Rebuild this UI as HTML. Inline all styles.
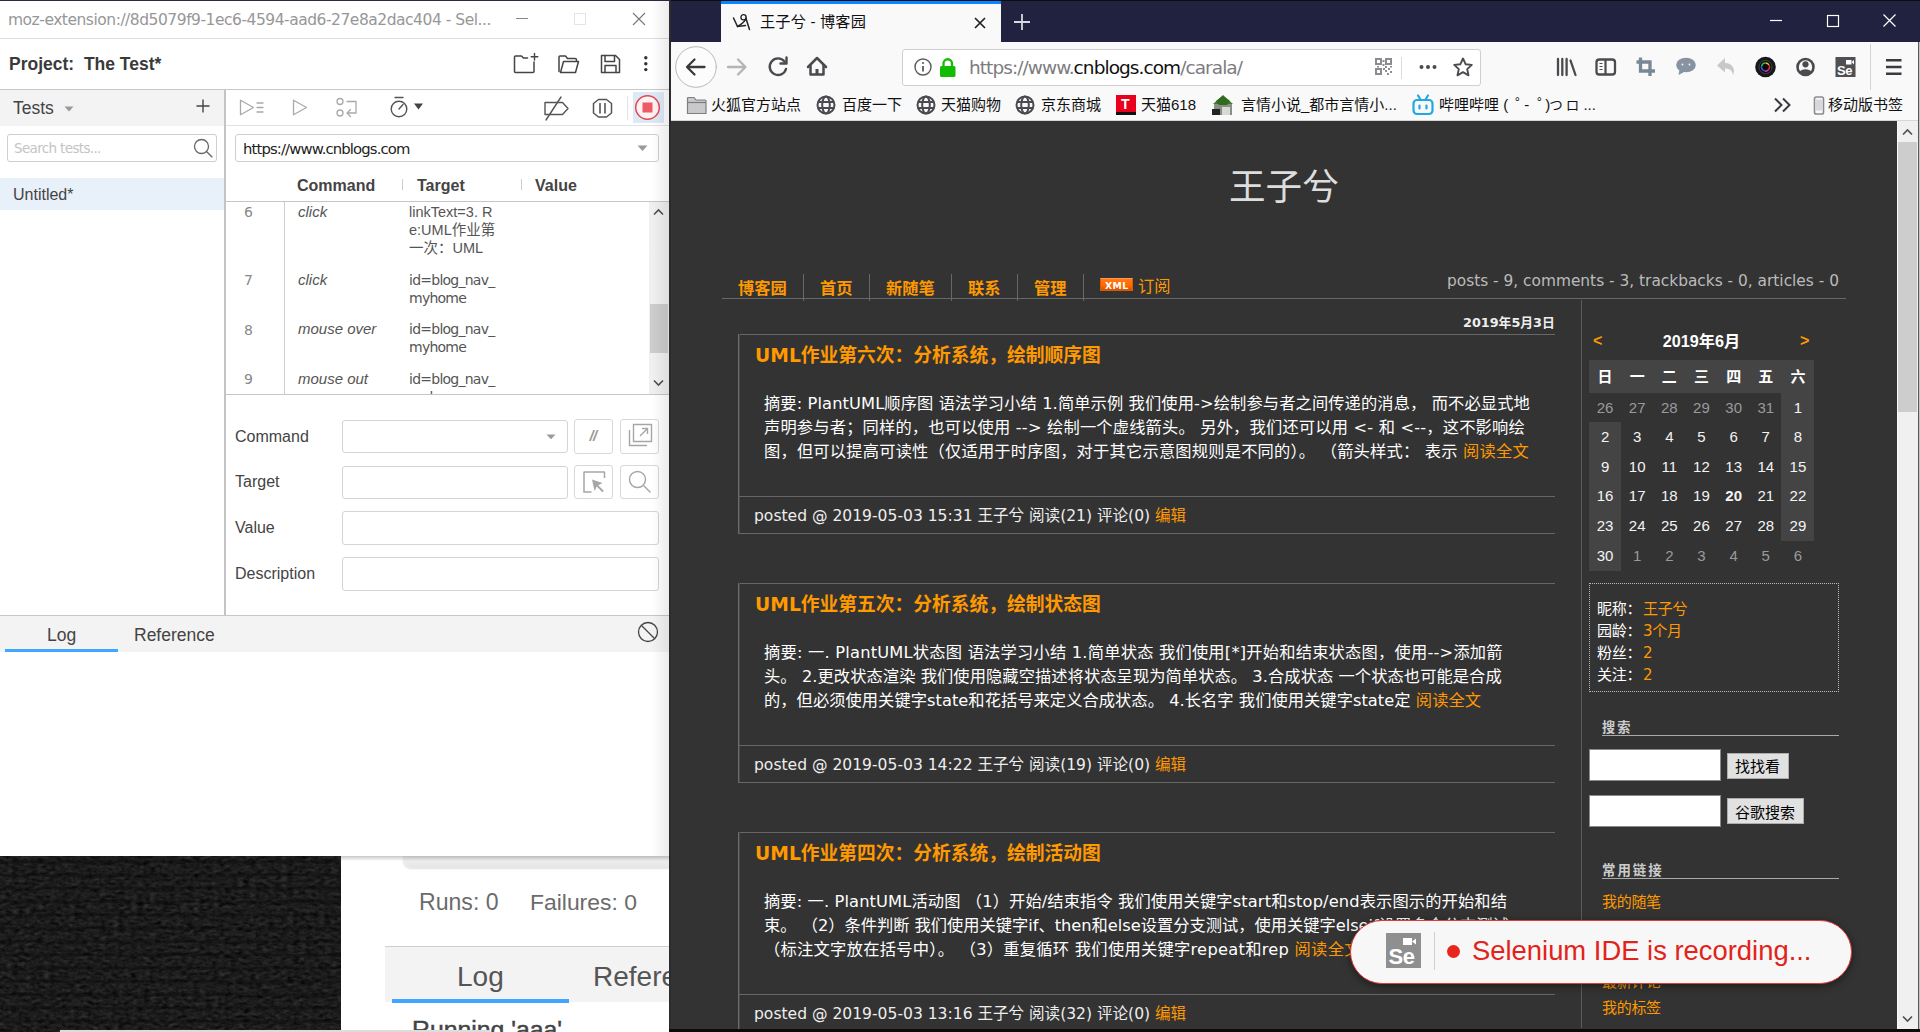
<!DOCTYPE html>
<html lang="zh-CN">
<head>
<meta charset="utf-8">
<title>Selenium IDE recording</title>
<style>
*{box-sizing:border-box;margin:0;padding:0}
html,body{width:1920px;height:1032px;overflow:hidden;background:#1b1b1b}
body{position:relative;font-family:"Liberation Sans","Noto Sans CJK SC",sans-serif;color:#333}
.abs{position:absolute}
svg{position:absolute;overflow:visible}
/* ---------- desktop bottom-left ---------- */
#desk{left:0;top:856px;width:341px;height:176px;background:#1c1c1c;overflow:hidden}
#desk:after{content:"";position:absolute;left:0;top:0;right:0;bottom:0;background:repeating-linear-gradient(0deg,rgba(0,0,0,.0) 0 8px,rgba(0,0,0,.28) 10px 11.5px,rgba(0,0,0,0) 13.3px)}
#back{left:341px;top:856px;width:329px;height:176px;background:#fff;overflow:hidden}
/* ---------- Selenium IDE window ---------- */
#ide{left:0;top:0;width:669px;height:856px;background:#fff;overflow:hidden}
#ide .t{position:absolute;white-space:nowrap;line-height:1}
/* ---------- Firefox window ---------- */
#ff{left:669px;top:0;width:1251px;height:1032px;background:#20223f;overflow:hidden}
#ff .t{position:absolute;white-space:nowrap;line-height:1}
#page{left:2px;top:121px;width:1226px;height:908px;background:#333;overflow:hidden;
 font-family:"DejaVu Sans","Noto Sans CJK SC",sans-serif;color:#eee}
#page .t{position:absolute;white-space:nowrap;line-height:1}
</style>
</head>
<body>
<div id="desk" class="abs"><svg style="left:0;top:0" width="341" height="176"><filter id="fab" x="0" y="0" width="100%" height="100%" color-interpolation-filters="sRGB"><feTurbulence type="fractalNoise" baseFrequency="0.16 0.3" numOctaves="3" seed="11"/><feColorMatrix type="matrix" values="0.12 0.12 0.12 0 -0.07  0.12 0.12 0.12 0 -0.07  0.12 0.12 0.12 0 -0.07  0 0 0 0 1"/></filter><rect width="341" height="176" filter="url(#fab)"/></svg></div>
<div id="back" class="abs"><div class="abs" style="left:0;top:0;width:329px;height:5px;background:linear-gradient(rgba(0,0,0,.22),rgba(0,0,0,0));z-index:3"></div><div class="abs" style="left:62px;top:0;width:267px;height:12px;background:linear-gradient(#f1f1f1,#e6e6e6);border-radius:0 0 0 8px;box-shadow:0 1px 2px rgba(0,0,0,.12)"></div>
<div class="abs" style="left:78px;top:35px;font-size:23.1px;color:#6b6b6b;line-height:1;white-space:nowrap">Runs: 0</div>
<div class="abs" style="left:189px;top:35px;font-size:22.9px;color:#6b6b6b;line-height:1;white-space:nowrap">Failures: 0</div>
<div class="abs" style="left:44px;top:90px;width:285px;height:56px;background:#f3f3f3;border-top:1px solid #cfcfcf"></div>
<div class="abs" style="left:116px;top:106.5px;font-size:28px;color:#555;line-height:1;white-space:nowrap">Log</div>
<div class="abs" style="left:252px;top:106.5px;font-size:28px;color:#555;line-height:1;white-space:nowrap">Reference</div>
<div class="abs" style="left:51px;top:142.5px;width:177px;height:4.5px;background:#40a6ff"></div>
<div class="abs" style="left:71px;top:162px;font-size:24.8px;color:#444;-webkit-text-stroke:.5px #444;line-height:1;white-space:nowrap">Running 'aaa'</div></div>
<div id="ide" class="abs"><div class="abs" style="left:0;top:0;width:669px;height:1px;background:#2a2a44"></div>
<div class="t" style="left:8px;top:13px;font-size:15.5px;color:#979797;font-family:'DejaVu Sans','Liberation Sans',sans-serif;letter-spacing:-.48px">moz-extension://8d5079f9-1ec6-4594-aad6-27e8a2dac404 - Sel...</div>
<svg style="left:508px;top:8px" width="150" height="24" viewBox="0 0 150 24" fill="none">
 <path d="M8 10.500H20" stroke="#888" stroke-width="1"/>
 <rect x="66.5" y="5.5" width="11" height="11" stroke="#e4e4e4" stroke-width="1"/>
 <path d="M125 5L137 17M137 5L125 17" stroke="#777" stroke-width="1.1"/>
</svg>
<div class="abs" style="left:0;top:38px;width:669px;height:1px;background:#dcdcdc"></div>
<!-- project header -->
<div class="t" style="left:9px;top:56px;font-size:17.5px;font-weight:bold;color:#3a3a3a">Project:&nbsp; The Test*</div>
<svg style="left:510px;top:51px" width="150" height="28" viewBox="0 0 150 28" fill="none" stroke="#444" stroke-width="1.5" stroke-linejoin="round" stroke-linecap="round">
 <path d="M24 11V20.500Q24 21.500 23 21.500H5.500Q4.500 21.500 4.500 20.500V6Q4.500 5 5.500 5H11.500L13.500 7H17.500"/><path d="M24.500 2.500V9M21.200 5.800H27.800" stroke-width="1.400"/>
 <path d="M49 20.500V6Q49 5 50 5H55.500L57.500 7.500H65Q66.500 7.500 66.500 9V10"/><path d="M50.500 21.500L53.500 10.500H68.500L65.500 21.500Z"/>
 <path d="M91.500 4.500H105.500L109.500 8.500V21.500H91.500Z"/><path d="M95 4.500V10.500H104.500V4.500"/><path d="M95 21.500V14.500H106V21.500"/>
 <g fill="#333" stroke="none"><circle cx="135.800" cy="6.800" r="1.700"/><circle cx="135.800" cy="12.700" r="1.700"/><circle cx="135.800" cy="18.600" r="1.700"/></g>
</svg>
<div class="abs" style="left:0;top:89px;width:669px;height:1px;background:#c8c8c8"></div>
<!-- left panel -->
<div class="abs" style="left:0;top:90px;width:224px;height:36px;background:#f3f3f3"></div>
<div class="t" style="left:13px;top:99.5px;font-size:17.5px;color:#444">Tests</div>
<svg style="left:64px;top:106px" width="10" height="6"><path d="M0.500 0.500H9.500L5 5.500Z" fill="#999"/></svg>
<svg style="left:196px;top:99px" width="14" height="14"><path d="M7 0.500V13.500M0.500 7H13.500" stroke="#444" stroke-width="1.400"/></svg>
<div class="abs" style="left:7px;top:134px;width:210px;height:28px;border:1px solid #cfcfcf;border-radius:3px;background:#fff"></div>
<div class="t" style="left:14px;top:142px;font-size:13.5px;color:#c4c4c4;font-family:'DejaVu Sans','Liberation Sans',sans-serif;letter-spacing:-.65px">Search tests...</div>
<svg style="left:193px;top:138px" width="22" height="22" fill="none" stroke="#666" stroke-width="1.300"><circle cx="8.500" cy="8.500" r="7"/><path d="M13.500 13.500L19.300 19.300"/></svg>
<div class="abs" style="left:0;top:178px;width:224px;height:32px;background:#e8f0f9"></div>
<div class="t" style="left:13px;top:187px;font-size:16px;color:#444">Untitled*</div>
<div class="abs" style="left:224px;top:90px;width:2px;height:525px;background:#c4c4c4"></div>
<!-- toolbar -->
<svg style="left:236px;top:92px" width="432" height="32" viewBox="0 0 432 32" fill="none" stroke-linejoin="round" stroke-linecap="round">
 <g stroke="#a9a9a9" stroke-width="1.300">
  <path d="M4.500 8.200L17.500 15.500L4.500 22.800Z"/><path d="M21 11H27M21 15.500H27M21 20H27"/>
  <path d="M57.500 8.200L70.500 15.500L57.500 22.800Z"/>
  <circle cx="104" cy="9.500" r="3"/><circle cx="104" cy="21" r="3"/><path d="M111 9.500H120V21H111M114.500 17.500L111 21L114.500 24.500"/>
 </g>
 <g stroke="#555" stroke-width="1.400">
  <circle cx="163" cy="17" r="7.800"/><path d="M159 5.500H167"/><path d="M163 17L167 12.500"/>
  <path d="M309 10.500H326.500L332 16.500L326.500 22.500H309Z"/><path d="M325 5L310 28"/>
  <path d="M362.500 7.500H370.500L375.500 11.500V21L370.500 25H362.500L357.500 21V11.500Z" stroke-width="1.500"/><path d="M364 11.500V21M369 11.500V21" stroke-width="1.600"/>
 </g>
 <path d="M178 11.500H187L182.500 17.500Z" fill="#444"/>
 <path d="M391.500 4V28" stroke="#e3e3e3" stroke-width="1"/>
 <rect x="397" y="0" width="31" height="31" fill="#dce9f7"/>
 <circle cx="411.500" cy="15.500" r="11.800" stroke="#e8444f" stroke-width="1.500" fill="#fdf3f3"/>
 <rect x="406.500" y="10.500" width="10" height="10" fill="#ee5b64"/>
</svg>
<div class="abs" style="left:226px;top:125px;width:443px;height:1px;background:#e2e2e2"></div>
<div class="abs" style="left:235px;top:134px;width:424px;height:28px;border:1px solid #cfcfcf;border-radius:3px;background:#fff"></div>
<div class="t" style="left:243px;top:141.5px;font-size:14.8px;color:#222;font-family:'DejaVu Sans','Liberation Sans',sans-serif;letter-spacing:-.85px">https://www.cnblogs.com</div>
<svg style="left:637px;top:145px" width="12" height="7"><path d="M0.500 0.500H10.500L5.500 6Z" fill="#999"/></svg>
<!-- table header -->
<div class="t" style="left:297px;top:178px;font-size:16px;font-weight:bold;color:#444">Command</div>
<div class="t" style="left:417px;top:178px;font-size:16px;font-weight:bold;color:#444">Target</div>
<div class="t" style="left:535px;top:178px;font-size:16px;font-weight:bold;color:#444">Value</div>
<div class="abs" style="left:402px;top:179px;width:1px;height:11px;background:#ccc"></div>
<div class="abs" style="left:521px;top:179px;width:1px;height:11px;background:#ccc"></div>
<div class="abs" style="left:226px;top:201px;width:443px;height:1px;background:#c6c6c6"></div>
<!-- table rows -->
<div class="abs" style="left:226px;top:202px;width:443px;height:192px;overflow:hidden;font-size:14.5px;color:#555">
 <div class="abs" style="left:58px;top:0;width:1px;height:192px;background:#cfcfcf"></div>
 <div class="t" style="left:18px;top:3px;color:#888;font-family:'DejaVu Sans',sans-serif;font-size:14px">6</div>
 <div class="t" style="left:72px;top:2px;font-style:italic;font-size:15px">click</div>
 <div class="t" style="left:183px;top:1px;line-height:18px">linkText=3. R<br>e:UML作业第<br>一次：UML</div>
 <div class="t" style="left:18px;top:71px;color:#888;font-family:'DejaVu Sans',sans-serif;font-size:14px">7</div>
 <div class="t" style="left:72px;top:70px;font-style:italic;font-size:15px">click</div>
 <div class="t" style="left:183px;top:69px;line-height:18px;font-family:'DejaVu Sans',sans-serif;font-size:14px;letter-spacing:-.75px">id=blog_nav_<br>myhome</div>
 <div class="t" style="left:18px;top:121px;color:#888;font-family:'DejaVu Sans',sans-serif;font-size:14px">8</div>
 <div class="t" style="left:72px;top:119px;font-style:italic;font-size:15px">mouse over</div>
 <div class="t" style="left:183px;top:118px;line-height:18px;font-family:'DejaVu Sans',sans-serif;font-size:14px;letter-spacing:-.75px">id=blog_nav_<br>myhome</div>
 <div class="t" style="left:18px;top:170px;color:#888;font-family:'DejaVu Sans',sans-serif;font-size:14px">9</div>
 <div class="t" style="left:72px;top:169px;font-style:italic;font-size:15px">mouse out</div>
 <div class="t" style="left:183px;top:168px;line-height:18px;font-family:'DejaVu Sans',sans-serif;font-size:14px;letter-spacing:-.75px">id=blog_nav_<br>myhome</div>
 <!-- scrollbar -->
 <div class="abs" style="left:423px;top:0;width:20px;height:192px;background:#f0f0f0"></div>
 <div class="abs" style="left:424px;top:102px;width:18px;height:49px;background:#cdcdcd"></div>
 <svg style="left:427px;top:6px" width="12" height="8"><path d="M1 6.500L5.500 2L10 6.500" fill="none" stroke="#505050" stroke-width="1.600"/></svg>
 <svg style="left:427px;top:177px" width="12" height="8"><path d="M1 1.500L5.500 6L10 1.500" fill="none" stroke="#505050" stroke-width="1.600"/></svg>
</div>
<div class="abs" style="left:226px;top:394px;width:443px;height:1px;background:#c6c6c6"></div>
<!-- command form -->
<div class="t" style="left:235px;top:429px;font-size:16px;color:#444">Command</div>
<div class="t" style="left:235px;top:474px;font-size:16px;color:#444">Target</div>
<div class="t" style="left:235px;top:520px;font-size:16px;color:#444">Value</div>
<div class="t" style="left:235px;top:566px;font-size:16px;color:#444">Description</div>
<div class="abs" style="left:342px;top:420px;width:226px;height:33px;border:1px solid #d4d4d4;border-radius:3px"></div>
<svg style="left:545.5px;top:433.5px" width="12" height="7"><path d="M0.500 0.500H9.500L5 5.200Z" fill="#9a9a9a"/></svg>
<div class="abs" style="left:574px;top:419px;width:39px;height:35px;border:1px solid #d8d8d8;border-radius:3px"></div>
<div class="t" style="left:589.5px;top:428px;font-size:15px;color:#9a9a9a;font-style:italic;font-weight:bold;letter-spacing:-.6px">//</div>
<div class="abs" style="left:620px;top:419px;width:39px;height:35px;border:1px solid #d8d8d8;border-radius:3px"></div>
<svg style="left:628px;top:423px" width="26" height="26" fill="none" stroke="#a6a6a6" stroke-width="1.400"><path d="M5.500 1.500H23.500V18.500H5.500Z"/><path d="M1.500 7V22.500H19"/><path d="M12 13L19.500 5.500M14 5.500H19.500V11"/></svg>
<div class="abs" style="left:342px;top:466px;width:226px;height:33px;border:1px solid #d4d4d4;border-radius:3px"></div>
<div class="abs" style="left:574px;top:465px;width:39px;height:34px;border:1px solid #d8d8d8;border-radius:3px"></div>
<svg style="left:582px;top:470px" width="26" height="26" fill="none" stroke="#a6a6a6" stroke-width="1.500"><path d="M22.500 8V2.500Q22.500 2 22 2H2.500Q2 2 2 2.500V22H9.500"/><path d="M10 9.500L20.500 13L16.200 15.200L21.800 20.800L20.400 22.200L14.800 16.600L12.500 21Z" fill="#a6a6a6" stroke="none"/></svg>
<div class="abs" style="left:620px;top:465px;width:39px;height:34px;border:1px solid #d8d8d8;border-radius:3px"></div>
<svg style="left:628px;top:470px" width="26" height="26" fill="none" stroke="#a6a6a6" stroke-width="1.400"><circle cx="9.500" cy="9.500" r="8"/><path d="M15.500 15.500L22.500 22.500"/></svg>
<div class="abs" style="left:342px;top:511px;width:317px;height:34px;border:1px solid #d4d4d4;border-radius:3px"></div>
<div class="abs" style="left:342px;top:557px;width:317px;height:34px;border:1px solid #d4d4d4;border-radius:3px"></div>
<!-- bottom tab bar -->
<div class="abs" style="left:0;top:615px;width:669px;height:37px;background:#f3f3f3;border-top:1px solid #c6c6c6"></div>
<div class="t" style="left:47px;top:626.5px;font-size:17.5px;color:#444">Log</div>
<div class="t" style="left:134px;top:626.5px;font-size:17.5px;color:#444">Reference</div>
<div class="abs" style="left:5px;top:649px;width:113px;height:3px;background:#40a6ff"></div>
<svg style="left:637px;top:621px" width="22" height="22" fill="none" stroke="#444" stroke-width="1.300"><circle cx="11" cy="11" r="9.500"/><path d="M4.500 4.500L17.500 17.500"/></svg>
<!-- right edge shadow -->
<div class="abs" style="left:652px;top:0;width:17px;height:856px;background:linear-gradient(90deg,rgba(0,0,0,0),rgba(0,0,0,.08))"></div>
</div>
<div id="ff" class="abs"><div class="abs" style="left:0;top:0;width:2px;height:1032px;background:#2b2b30"></div>
<div class="abs" style="left:2px;top:0;width:1249px;height:1px;background:#0c0c14"></div>
<!-- tab -->
<div class="abs" style="left:52px;top:1px;width:280px;height:41px;background:#f9f9fa;border-top:3px solid #0a84ff"></div>
<svg style="left:63px;top:12px" width="20" height="20" viewBox="0 0 20 20" fill="none" stroke="#222" stroke-width="1.500" stroke-linecap="round"><circle cx="11.500" cy="5.200" r="2.600" stroke-width="1.300"/><path d="M1.500 6L5.500 14.500L13.500 13.500"/><path d="M5.500 14.500C10 12 13 9 14 6.500L17.500 17.500"/></svg>
<div class="t" style="left:91px;top:14px;font-size:15.2px;color:#111;letter-spacing:.15px;font-family:'Liberation Sans','Noto Sans CJK SC',sans-serif">王子兮 - 博客园</div>
<svg style="left:305px;top:17px" width="12" height="12"><path d="M1 1L11 11M11 1L1 11" stroke="#222" stroke-width="1.700"/></svg>
<svg style="left:344px;top:13px" width="18" height="18"><path d="M9 1V17M1 9H17" stroke="#d8d8e0" stroke-width="1.800"/></svg>
<!-- window controls -->
<svg style="left:1095px;top:10px" width="140" height="22" fill="none" stroke="#fff" stroke-width="1.200"><path d="M6 10.500H18"/><rect x="63.500" y="5.500" width="11" height="11"/><path d="M119.500 4.500L131.500 16.500M131.500 4.500L119.500 16.500"/></svg>
<!-- nav bar -->
<div class="abs" style="left:2px;top:42px;width:1249px;height:79px;background:#f9f9fa"></div>
<div class="abs" style="left:2px;top:120px;width:1249px;height:1px;background:#d6d6d6"></div>
<svg style="left:4px;top:45px" width="170" height="44" viewBox="0 0 170 44" fill="none" stroke-linecap="round" stroke-linejoin="round">
 <circle cx="23" cy="22" r="20.300" fill="#fcfcfc" stroke="#b9b9b9" stroke-width="1"/>
 <path d="M31.500 22H14.500M21.500 14.500L14 22L21.500 29.500" stroke="#3a3a3a" stroke-width="2.300"/>
 <path d="M55 22H72M65 14.500L72.500 22L65 29.500" stroke="#b4b4b6" stroke-width="2.300"/>
 <path d="M111.500 16.500A8.300 8.300 0 1 0 113 24" stroke="#4a4a4f" stroke-width="2.400"/><path d="M113.500 12.500V18.500H107.500" stroke="#4a4a4f" stroke-width="2.400"/>
 <path d="M135 22L144 13L153 22" stroke="#4a4a4f" stroke-width="2.500"/><path d="M137.500 20.500V29.500H150.500V20.500" stroke="#4a4a4f" stroke-width="2.500"/><rect x="142.500" y="24" width="3" height="5" fill="#4a4a4f" stroke="none"/>
</svg>
<!-- url bar -->
<div class="abs" style="left:233px;top:49px;width:579px;height:37px;background:#fff;border:1px solid #cfcfd2;border-radius:3px"></div>
<svg style="left:244px;top:57px" width="46" height="22" viewBox="0 0 46 22" fill="none"><circle cx="10" cy="10" r="8" stroke="#5a5a5e" stroke-width="1.400"/><path d="M10 9V14.500" stroke="#5a5a5e" stroke-width="1.800"/><circle cx="10" cy="6" r="1.100" fill="#5a5a5e"/>
 <rect x="27" y="9" width="15.500" height="11" rx="1.500" fill="#12bc00"/><path d="M30.500 9V6.500A4.200 4.200 0 0 1 39 6.500V9" stroke="#12bc00" stroke-width="2.300"/></svg>
<div class="t" style="left:300px;top:59px;font-size:18.5px;color:#7c7c80;font-family:'DejaVu Sans','Liberation Sans',sans-serif;letter-spacing:-.94px">https://www.<span style="color:#111">cnblogs.com</span>/carala/</div>
<svg style="left:705px;top:57px" width="100" height="22" viewBox="0 0 100 22" fill="none">
 <g fill="#8c8c90"><path d="M1 1h7v7h-7zM3 3v3h3v-3zM11 1h7v7h-7zM13 3v3h3v-3zM1 11h7v7h-7zM3 13v3h3v-3z" fill-rule="evenodd"/><rect x="8.500" y="3" width="2" height="2"/><rect x="8.500" y="7" width="2" height="2"/><rect x="11" y="9" width="2" height="2"/><rect x="14" y="11" width="2" height="2"/><rect x="11" y="13" width="2" height="2"/><rect x="16" y="14" width="2" height="2"/><rect x="13" y="16" width="2" height="2"/><rect x="9" y="11" width="2" height="2"/><rect x="3" y="9" width="2" height="1.500"/><rect x="16" y="9" width="2" height="1.500"/></g>
 <path d="M27.500 0V22" stroke="#dcdcdf" stroke-width="1"/>
 <g fill="#4a4a4f"><circle cx="47.500" cy="10" r="2"/><circle cx="54" cy="10" r="2"/><circle cx="60.500" cy="10" r="2"/></g>
 <path d="M89 1.500L91.600 7.200L97.800 7.900L93.200 12.100L94.500 18.300L89 15.200L83.500 18.300L84.800 12.100L80.200 7.900L86.400 7.200Z" stroke="#4a4a4f" stroke-width="1.900" stroke-linejoin="round"/>
</svg>
<!-- toolbar right icons -->
<svg style="left:880px;top:52px" width="370" height="30" viewBox="0 0 370 30" fill="none">
 <g stroke="#4a4a4f" stroke-width="2.300" stroke-linecap="round"><path d="M9 7V23M13.300 7V23M17.600 7V23M21.500 8.500L26.500 23"/></g>
 <rect x="47.500" y="7.500" width="18.500" height="15" rx="2.800" stroke="#4a4a4f" stroke-width="2.300"/><path d="M56.500 8V22" stroke="#4a4a4f" stroke-width="2.200"/><path d="M50.500 11.500H53.500M50.500 14.500H53.500M50.500 17.500H53.500" stroke="#4a4a4f" stroke-width="1.200"/>
 <g stroke="#7b8797" stroke-width="3.300"><path d="M91.500 5.500V19H106"/><path d="M87.500 10H101V24"/></g>
 <ellipse cx="137" cy="13" rx="9.800" ry="7.300" fill="#8893a2"/><path d="M130.500 17.500L129.500 23L136 19.500Z" fill="#8893a2"/><circle cx="133.500" cy="12.500" r=".9" fill="#f9f9fa"/><circle cx="140.500" cy="12.500" r=".9" fill="#f9f9fa"/>
 <path d="M176 6L168 13.500L176 20.500V16.500C181 16.500 183.500 18.500 184 23.500C187 17 183 11 176 11Z" fill="#c8c8cc"/>
 <circle cx="216.500" cy="15" r="10.300" fill="#17171c"/><circle cx="216.500" cy="15" r="6.500" fill="#08080c" stroke="#4a4a55" stroke-width=".9"/>
 <path d="M216.500 11A4 4 0 0 1 220 13" stroke="#f0c020" stroke-width="1.400"/><path d="M220 13A4 4 0 0 1 219.500 17.800" stroke="#e03030" stroke-width="1.400"/><path d="M219.500 17.800A4 4 0 0 1 214.500 18.500" stroke="#d030d0" stroke-width="1.400"/><path d="M214.500 18.500A4 4 0 0 1 212.600 14" stroke="#3060e0" stroke-width="1.400"/><path d="M212.600 14A4 4 0 0 1 216.500 11" stroke="#30c040" stroke-width="1.400"/>
 <circle cx="256.500" cy="15" r="8" stroke="#4a4a4f" stroke-width="2.600"/><circle cx="256.500" cy="12.300" r="3.100" fill="#4a4a4f"/><path d="M250.500 20C252.500 16.200 260.500 16.200 262.500 20C260 23.500 253 23.500 250.500 20Z" fill="#4a4a4f"/>
 <rect x="286.500" y="5" width="20" height="20" fill="#4f4f54"/><rect x="297" y="8" width="5.500" height="4.500" fill="#fff"/><path d="M302.500 10L305 8V12.500Z" fill="#fff"/>
 <path d="M321.500 -8V38" stroke="#d4d4d8" stroke-width="1"/>
 <g stroke="#3a3a3f" stroke-width="2.500"><path d="M337 8.200H352.500M337 15H352.500M337 21.800H352.500"/></g>
</svg>
<div class="t" style="left:1168px;top:64px;font-size:13px;font-weight:bold;color:#fff;letter-spacing:-.3px">Se</div>
<!-- bookmarks -->
<div id="bm" class="abs" style="left:2px;top:92px;width:1249px;height:27px;font-size:15px;color:#111;font-family:'Liberation Sans','Noto Sans CJK SC',sans-serif">
 <svg style="left:15px;top:4px" width="22" height="19" fill="#c9c9cc" stroke="#7d7d82" stroke-width="1.200"><path d="M1.500 17.500V2.500Q1.500 1.500 2.500 1.500H8L10 4H19Q20 4 20 5V17.500Z"/><path d="M1.500 6.500H20" fill="none"/></svg>
 <div class="t" style="left:40px;top:5px">火狐官方站点</div>
 <svg style="left:145px;top:3px" width="20" height="20" fill="none" stroke="#4a4a4f" stroke-width="2"><circle cx="10" cy="10" r="8.500"/><ellipse cx="10" cy="10" rx="3.800" ry="8.500"/><path d="M2 7H18M2 13H18"/></svg>
 <div class="t" style="left:171px;top:5px">百度一下</div>
 <svg style="left:245px;top:3px" width="20" height="20" fill="none" stroke="#4a4a4f" stroke-width="2"><circle cx="10" cy="10" r="8.500"/><ellipse cx="10" cy="10" rx="3.800" ry="8.500"/><path d="M2 7H18M2 13H18"/></svg>
 <div class="t" style="left:270px;top:5px">天猫购物</div>
 <svg style="left:344px;top:3px" width="20" height="20" fill="none" stroke="#4a4a4f" stroke-width="2"><circle cx="10" cy="10" r="8.500"/><ellipse cx="10" cy="10" rx="3.800" ry="8.500"/><path d="M2 7H18M2 13H18"/></svg>
 <div class="t" style="left:370px;top:5px">京东商城</div>
 <div class="abs" style="left:445px;top:3px;width:20px;height:20px;background:#e8001c;border-bottom:3px solid #111"></div>
 <div class="t" style="left:450px;top:5px;font-size:14px;font-weight:bold;color:#fff">T</div>
 <div class="t" style="left:470px;top:5px">天猫618</div>
 <svg style="left:541px;top:3px" width="22" height="21"><rect x="2" y="9" width="18" height="11" fill="#8a8f86"/><path d="M1 9L11 0L21 9Z" fill="#3e7d2a"/><path d="M4 6L11 1L18 6L15 10H7Z" fill="#2f6a1f"/><rect x="0" y="14" width="8" height="6" fill="#222"/><rect x="10" y="12" width="8" height="8" fill="#d8d8d4"/></svg>
 <div class="t" style="left:570px;top:5px">言情小说_都市言情小...</div>
 <svg style="left:741px;top:2px" width="22" height="22" fill="none" stroke="#23a7e0" stroke-width="2.200" stroke-linecap="round"><rect x="1.500" y="6" width="19" height="14" rx="3.500"/><path d="M6 1.500L8.500 5.500M16 1.500L13.500 5.500"/><path d="M7.500 11.500V14.500M14.500 11.500V14.500"/></svg>
 <div class="t" style="left:768px;top:5px">哔哩哔哩 (<span style="margin-left:7px;margin-right:-6px">゜</span>-<span style="margin-left:8px;margin-right:-7px">゜</span>)<span style="font-size:13.5px;margin-left:-1px;letter-spacing:3px">つロ</span> <span style="margin-left:-3px">...</span></div>
 <svg style="left:1102px;top:5px" width="20" height="16" fill="none" stroke="#3a3a3f" stroke-width="2"><path d="M2 1.500L8.500 8L2 14.500M10 1.500L16.500 8L10 14.500"/></svg>
 <svg style="left:1142px;top:4px" width="12" height="19" fill="none"><rect x="1.500" y="1" width="9" height="17" rx="1.800" stroke="#8c8c90" stroke-width="1.600"/><rect x="3" y="3.500" width="6" height="11" fill="#d8d8dc"/></svg>
 <div class="t" style="left:1157px;top:5px">移动版书签</div>
</div>
<!-- scrollbar -->
<div class="abs" style="left:1228px;top:121px;width:21px;height:908px;background:#f0f0f0;border-left:1px solid #fafafa"></div>
<div class="abs" style="left:1229px;top:142px;width:19px;height:270px;background:#cdcdcd"></div>
<svg style="left:1233px;top:127.5px" width="12" height="8"><path d="M1 6.500L5.500 2L10 6.500" fill="none" stroke="#505050" stroke-width="1.600"/></svg>
<svg style="left:1233px;top:1014.5px" width="12" height="8"><path d="M1 1.500L5.500 6L10 1.500" fill="none" stroke="#505050" stroke-width="1.600"/></svg>
<div class="abs" style="left:1249px;top:42px;width:1px;height:990px;background:#5a5a5a"></div><div class="abs" style="left:1250px;top:42px;width:1px;height:990px;background:#c4c4c4"></div>
<div class="abs" style="left:0;top:1029px;width:1251px;height:3px;background:#0c0c0e"></div>

<div id="page" class="abs"><div class="abs" style="left:-671px;top:-121px;width:1920px;height:1032px">
<div class="t" style="left:1229px;top:167px;font-size:36.6px;color:#ddd;font-weight:400;font-family:'Noto Sans CJK SC',sans-serif">王子兮</div>
<div class="t" style="left:738px;top:279px;font-size:16.25px;font-weight:bold;color:#f90;font-family:'Noto Sans CJK SC',sans-serif">博客园</div>
<div class="t" style="left:820px;top:279px;font-size:16.25px;font-weight:bold;color:#f90;font-family:'Noto Sans CJK SC',sans-serif">首页</div>
<div class="t" style="left:886px;top:279px;font-size:16.25px;font-weight:bold;color:#f90;font-family:'Noto Sans CJK SC',sans-serif">新随笔</div>
<div class="t" style="left:968px;top:279px;font-size:16.25px;font-weight:bold;color:#f90;font-family:'Noto Sans CJK SC',sans-serif">联系</div>
<div class="t" style="left:1034px;top:279px;font-size:16.25px;font-weight:bold;color:#f90;font-family:'Noto Sans CJK SC',sans-serif">管理</div>
<div class="abs" style="left:803px;top:274px;width:1px;height:27px;background:#676767;"></div>
<div class="abs" style="left:869px;top:274px;width:1px;height:27px;background:#676767;"></div>
<div class="abs" style="left:951px;top:274px;width:1px;height:27px;background:#676767;"></div>
<div class="abs" style="left:1017px;top:274px;width:1px;height:27px;background:#676767;"></div>
<div class="abs" style="left:1083px;top:274px;width:1px;height:27px;background:#676767;"></div>
<div class="abs" style="left:1100px;top:278px;width:33px;height:13px;background:linear-gradient(#ff7a1a,#ff6a00 60%,#d85200);border:1px solid #d65a08;border-top-color:#ff9a4a"></div>
<div class="t" style="left:1105px;top:280.5px;font-size:9.3px;font-weight:bold;color:#fff;font-family:'DejaVu Sans',sans-serif;letter-spacing:.45px">XML</div>
<div class="t" style="left:1138px;top:277px;font-size:16.25px;color:#f90;font-family:'Noto Sans CJK SC',sans-serif">订阅</div>
<div class="t" style="left:1447px;top:273.5px;font-size:15.38px;color:#bbb">posts - 9, comments - 3, trackbacks - 0, articles - 0</div>
<div class="abs" style="left:722px;top:298px;width:1124px;height:1px;background:#676767;"></div>
<div class="t" style="left:1463px;top:316.5px;font-size:12.8px;font-weight:bold;color:#eee">2019年5月3日</div>
<div class="abs" style="left:1581px;top:300px;width:1px;height:728px;background:#5c5c5c;"></div>
<div class="abs" style="left:738px;top:334px;width:817px;height:1px;background:#676767;"></div>
<div class="abs" style="left:738px;top:334px;width:2px;height:200px;background:linear-gradient(90deg,#6c6c6c 50%,#484848 50%);"></div>
<div class="abs" style="left:738px;top:496px;width:817px;height:1px;background:#676767;"></div>
<div class="abs" style="left:738px;top:533px;width:817px;height:1px;background:#676767;"></div>
<div class="t" style="left:755px;top:346.5px;font-size:18.75px;font-weight:bold;color:#f90">UML作业第六次：分析系统，绘制顺序图</div>
<div class="t" style="left:764px;top:396px;font-size:16.25px;color:#fff;letter-spacing:0.110px">摘要: PlantUML顺序图 语法学习小结 1.简单示例 我们使用-&gt;绘制参与者之间传递的消息， 而不必显式地</div>
<div class="t" style="left:764px;top:420px;font-size:16.25px;color:#fff;letter-spacing:0.180px">声明参与者；同样的，也可以使用 --&gt; 绘制一个虚线箭头。 另外，我们还可以用 &lt;- 和 &lt;--，这不影响绘</div>
<div class="t" style="left:764px;top:444px;font-size:16.25px;color:#fff;letter-spacing:0.204px">图，但可以提高可读性（仅适用于时序图，对于其它示意图规则是不同的）。 （箭头样式： 表示 <span style="color:#f90">阅读全文</span></div>
<div class="t" style="left:754px;top:509px;font-size:15.55px;color:#eee">posted @ 2019-05-03 15:31 王子兮 阅读(21) 评论(0) <span style="color:#f90">编辑</span></div>
<div class="abs" style="left:738px;top:583px;width:817px;height:1px;background:#676767;"></div>
<div class="abs" style="left:738px;top:583px;width:2px;height:200px;background:linear-gradient(90deg,#6c6c6c 50%,#484848 50%);"></div>
<div class="abs" style="left:738px;top:745px;width:817px;height:1px;background:#676767;"></div>
<div class="abs" style="left:738px;top:782px;width:817px;height:1px;background:#676767;"></div>
<div class="t" style="left:755px;top:595.5px;font-size:18.75px;font-weight:bold;color:#f90">UML作业第五次：分析系统，绘制状态图</div>
<div class="t" style="left:764px;top:645px;font-size:16.25px;color:#fff;letter-spacing:0.215px">摘要: 一. PlantUML状态图 语法学习小结 1.简单状态 我们使用[*]开始和结束状态图，使用--&gt;添加箭</div>
<div class="t" style="left:764px;top:669px;font-size:16.25px;color:#fff;letter-spacing:0.072px">头。 2.更改状态渲染 我们使用隐藏空描述将状态呈现为简单状态。 3.合成状态 一个状态也可能是合成</div>
<div class="t" style="left:764px;top:693px;font-size:16.25px;color:#fff;letter-spacing:0.047px">的，但必须使用关键字state和花括号来定义合成状态。 4.长名字 我们使用关键字state定 <span style="color:#f90">阅读全文</span></div>
<div class="t" style="left:754px;top:758px;font-size:15.55px;color:#eee">posted @ 2019-05-03 14:22 王子兮 阅读(19) 评论(0) <span style="color:#f90">编辑</span></div>
<div class="abs" style="left:738px;top:832px;width:817px;height:1px;background:#676767;"></div>
<div class="abs" style="left:738px;top:832px;width:2px;height:200px;background:linear-gradient(90deg,#6c6c6c 50%,#484848 50%);"></div>
<div class="abs" style="left:738px;top:994px;width:817px;height:1px;background:#676767;"></div>
<div class="abs" style="left:738px;top:1031px;width:817px;height:1px;background:#676767;"></div>
<div class="t" style="left:755px;top:844.5px;font-size:18.75px;font-weight:bold;color:#f90">UML作业第四次：分析系统，绘制活动图</div>
<div class="t" style="left:764px;top:894px;font-size:16.25px;color:#fff;letter-spacing:0.120px">摘要: 一. PlantUML活动图 （1）开始/结束指令 我们使用关键字start和stop/end表示图示的开始和结</div>
<div class="t" style="left:764px;top:918px;font-size:16.25px;color:#fff;letter-spacing:-0.010px">束。 （2）条件判断 我们使用关键字if、then和else设置分支测试，使用关键字elseif设置多个分支测试</div>
<div class="t" style="left:764px;top:942px;font-size:16.25px;color:#fff;letter-spacing:0.276px">（标注文字放在括号中）。 （3）重复循环 我们使用关键字repeat和rep <span style="color:#f90">阅读全文</span></div>
<div class="t" style="left:754px;top:1007px;font-size:15.55px;color:#eee">posted @ 2019-05-03 13:16 王子兮 阅读(32) 评论(0) <span style="color:#f90">编辑</span></div>
<div class="t" style="left:1593px;top:333px;font-size:16px;font-weight:bold;color:#f90;font-family:'Liberation Sans',sans-serif">&lt;</div>
<div class="t" style="left:1800px;top:333px;font-size:16px;font-weight:bold;color:#f90;font-family:'Liberation Sans',sans-serif">&gt;</div>
<div class="t" style="left:1589px;top:333px;width:225px;text-align:center;font-size:16.2px;font-weight:bold;color:#fff;font-family:'Liberation Sans','Noto Sans CJK SC',sans-serif">2019年6月</div>
<div class="abs" style="left:1589px;top:360px;width:225px;height:33px;background:#444;"></div>
<div class="abs" style="left:1781px;top:393px;width:33px;height:148px;background:#444;"></div>
<div class="abs" style="left:1589px;top:422px;width:32px;height:149px;background:#444;"></div>
<div class="t" style="left:1589.0px;top:368px;width:32.1px;text-align:center;font-size:15px;font-weight:bold;color:#fff;font-family:'Noto Sans CJK SC',sans-serif">日</div>
<div class="t" style="left:1621.1px;top:368px;width:32.1px;text-align:center;font-size:15px;font-weight:bold;color:#fff;font-family:'Noto Sans CJK SC',sans-serif">一</div>
<div class="t" style="left:1653.3px;top:368px;width:32.1px;text-align:center;font-size:15px;font-weight:bold;color:#fff;font-family:'Noto Sans CJK SC',sans-serif">二</div>
<div class="t" style="left:1685.4px;top:368px;width:32.1px;text-align:center;font-size:15px;font-weight:bold;color:#fff;font-family:'Noto Sans CJK SC',sans-serif">三</div>
<div class="t" style="left:1717.6px;top:368px;width:32.1px;text-align:center;font-size:15px;font-weight:bold;color:#fff;font-family:'Noto Sans CJK SC',sans-serif">四</div>
<div class="t" style="left:1749.7px;top:368px;width:32.1px;text-align:center;font-size:15px;font-weight:bold;color:#fff;font-family:'Noto Sans CJK SC',sans-serif">五</div>
<div class="t" style="left:1781.9px;top:368px;width:32.1px;text-align:center;font-size:15px;font-weight:bold;color:#fff;font-family:'Noto Sans CJK SC',sans-serif">六</div>
<div class="t" style="left:1589.0px;top:399.6px;width:32.1px;text-align:center;font-size:15px;font-weight:normal;color:#9a9a9a;font-family:'Liberation Sans',sans-serif">26</div>
<div class="t" style="left:1621.1px;top:399.6px;width:32.1px;text-align:center;font-size:15px;font-weight:normal;color:#9a9a9a;font-family:'Liberation Sans',sans-serif">27</div>
<div class="t" style="left:1653.3px;top:399.6px;width:32.1px;text-align:center;font-size:15px;font-weight:normal;color:#9a9a9a;font-family:'Liberation Sans',sans-serif">28</div>
<div class="t" style="left:1685.4px;top:399.6px;width:32.1px;text-align:center;font-size:15px;font-weight:normal;color:#9a9a9a;font-family:'Liberation Sans',sans-serif">29</div>
<div class="t" style="left:1717.6px;top:399.6px;width:32.1px;text-align:center;font-size:15px;font-weight:normal;color:#9a9a9a;font-family:'Liberation Sans',sans-serif">30</div>
<div class="t" style="left:1749.7px;top:399.6px;width:32.1px;text-align:center;font-size:15px;font-weight:normal;color:#9a9a9a;font-family:'Liberation Sans',sans-serif">31</div>
<div class="t" style="left:1781.9px;top:399.6px;width:32.1px;text-align:center;font-size:15px;font-weight:normal;color:#f4f4f4;font-family:'Liberation Sans',sans-serif">1</div>
<div class="t" style="left:1589.0px;top:429.2px;width:32.1px;text-align:center;font-size:15px;font-weight:normal;color:#f4f4f4;font-family:'Liberation Sans',sans-serif">2</div>
<div class="t" style="left:1621.1px;top:429.2px;width:32.1px;text-align:center;font-size:15px;font-weight:normal;color:#f4f4f4;font-family:'Liberation Sans',sans-serif">3</div>
<div class="t" style="left:1653.3px;top:429.2px;width:32.1px;text-align:center;font-size:15px;font-weight:normal;color:#f4f4f4;font-family:'Liberation Sans',sans-serif">4</div>
<div class="t" style="left:1685.4px;top:429.2px;width:32.1px;text-align:center;font-size:15px;font-weight:normal;color:#f4f4f4;font-family:'Liberation Sans',sans-serif">5</div>
<div class="t" style="left:1717.6px;top:429.2px;width:32.1px;text-align:center;font-size:15px;font-weight:normal;color:#f4f4f4;font-family:'Liberation Sans',sans-serif">6</div>
<div class="t" style="left:1749.7px;top:429.2px;width:32.1px;text-align:center;font-size:15px;font-weight:normal;color:#f4f4f4;font-family:'Liberation Sans',sans-serif">7</div>
<div class="t" style="left:1781.9px;top:429.2px;width:32.1px;text-align:center;font-size:15px;font-weight:normal;color:#f4f4f4;font-family:'Liberation Sans',sans-serif">8</div>
<div class="t" style="left:1589.0px;top:458.8px;width:32.1px;text-align:center;font-size:15px;font-weight:normal;color:#f4f4f4;font-family:'Liberation Sans',sans-serif">9</div>
<div class="t" style="left:1621.1px;top:458.8px;width:32.1px;text-align:center;font-size:15px;font-weight:normal;color:#f4f4f4;font-family:'Liberation Sans',sans-serif">10</div>
<div class="t" style="left:1653.3px;top:458.8px;width:32.1px;text-align:center;font-size:15px;font-weight:normal;color:#f4f4f4;font-family:'Liberation Sans',sans-serif">11</div>
<div class="t" style="left:1685.4px;top:458.8px;width:32.1px;text-align:center;font-size:15px;font-weight:normal;color:#f4f4f4;font-family:'Liberation Sans',sans-serif">12</div>
<div class="t" style="left:1717.6px;top:458.8px;width:32.1px;text-align:center;font-size:15px;font-weight:normal;color:#f4f4f4;font-family:'Liberation Sans',sans-serif">13</div>
<div class="t" style="left:1749.7px;top:458.8px;width:32.1px;text-align:center;font-size:15px;font-weight:normal;color:#f4f4f4;font-family:'Liberation Sans',sans-serif">14</div>
<div class="t" style="left:1781.9px;top:458.8px;width:32.1px;text-align:center;font-size:15px;font-weight:normal;color:#f4f4f4;font-family:'Liberation Sans',sans-serif">15</div>
<div class="t" style="left:1589.0px;top:488.4px;width:32.1px;text-align:center;font-size:15px;font-weight:normal;color:#f4f4f4;font-family:'Liberation Sans',sans-serif">16</div>
<div class="t" style="left:1621.1px;top:488.4px;width:32.1px;text-align:center;font-size:15px;font-weight:normal;color:#f4f4f4;font-family:'Liberation Sans',sans-serif">17</div>
<div class="t" style="left:1653.3px;top:488.4px;width:32.1px;text-align:center;font-size:15px;font-weight:normal;color:#f4f4f4;font-family:'Liberation Sans',sans-serif">18</div>
<div class="t" style="left:1685.4px;top:488.4px;width:32.1px;text-align:center;font-size:15px;font-weight:normal;color:#f4f4f4;font-family:'Liberation Sans',sans-serif">19</div>
<div class="t" style="left:1717.6px;top:488.4px;width:32.1px;text-align:center;font-size:15px;font-weight:bold;color:#f4f4f4;font-family:'Liberation Sans',sans-serif">20</div>
<div class="t" style="left:1749.7px;top:488.4px;width:32.1px;text-align:center;font-size:15px;font-weight:normal;color:#f4f4f4;font-family:'Liberation Sans',sans-serif">21</div>
<div class="t" style="left:1781.9px;top:488.4px;width:32.1px;text-align:center;font-size:15px;font-weight:normal;color:#f4f4f4;font-family:'Liberation Sans',sans-serif">22</div>
<div class="t" style="left:1589.0px;top:518.0px;width:32.1px;text-align:center;font-size:15px;font-weight:normal;color:#f4f4f4;font-family:'Liberation Sans',sans-serif">23</div>
<div class="t" style="left:1621.1px;top:518.0px;width:32.1px;text-align:center;font-size:15px;font-weight:normal;color:#f4f4f4;font-family:'Liberation Sans',sans-serif">24</div>
<div class="t" style="left:1653.3px;top:518.0px;width:32.1px;text-align:center;font-size:15px;font-weight:normal;color:#f4f4f4;font-family:'Liberation Sans',sans-serif">25</div>
<div class="t" style="left:1685.4px;top:518.0px;width:32.1px;text-align:center;font-size:15px;font-weight:normal;color:#f4f4f4;font-family:'Liberation Sans',sans-serif">26</div>
<div class="t" style="left:1717.6px;top:518.0px;width:32.1px;text-align:center;font-size:15px;font-weight:normal;color:#f4f4f4;font-family:'Liberation Sans',sans-serif">27</div>
<div class="t" style="left:1749.7px;top:518.0px;width:32.1px;text-align:center;font-size:15px;font-weight:normal;color:#f4f4f4;font-family:'Liberation Sans',sans-serif">28</div>
<div class="t" style="left:1781.9px;top:518.0px;width:32.1px;text-align:center;font-size:15px;font-weight:normal;color:#f4f4f4;font-family:'Liberation Sans',sans-serif">29</div>
<div class="t" style="left:1589.0px;top:547.6px;width:32.1px;text-align:center;font-size:15px;font-weight:normal;color:#f4f4f4;font-family:'Liberation Sans',sans-serif">30</div>
<div class="t" style="left:1621.1px;top:547.6px;width:32.1px;text-align:center;font-size:15px;font-weight:normal;color:#9a9a9a;font-family:'Liberation Sans',sans-serif">1</div>
<div class="t" style="left:1653.3px;top:547.6px;width:32.1px;text-align:center;font-size:15px;font-weight:normal;color:#9a9a9a;font-family:'Liberation Sans',sans-serif">2</div>
<div class="t" style="left:1685.4px;top:547.6px;width:32.1px;text-align:center;font-size:15px;font-weight:normal;color:#9a9a9a;font-family:'Liberation Sans',sans-serif">3</div>
<div class="t" style="left:1717.6px;top:547.6px;width:32.1px;text-align:center;font-size:15px;font-weight:normal;color:#9a9a9a;font-family:'Liberation Sans',sans-serif">4</div>
<div class="t" style="left:1749.7px;top:547.6px;width:32.1px;text-align:center;font-size:15px;font-weight:normal;color:#9a9a9a;font-family:'Liberation Sans',sans-serif">5</div>
<div class="t" style="left:1781.9px;top:547.6px;width:32.1px;text-align:center;font-size:15px;font-weight:normal;color:#9a9a9a;font-family:'Liberation Sans',sans-serif">6</div>
<div class="abs" style="left:1589px;top:583px;width:250px;height:109px;border:1px dotted #bbb"></div>
<div class="t" style="left:1597px;top:602px;font-size:15px;color:#fff;font-family:'DejaVu Sans','Noto Sans CJK SC',sans-serif;letter-spacing:-.3px">昵称：<span style="color:#f90;margin-left:2px">王子兮</span></div>
<div class="t" style="left:1597px;top:624px;font-size:15px;color:#fff;font-family:'DejaVu Sans','Noto Sans CJK SC',sans-serif;letter-spacing:-.3px">园龄：<span style="color:#f90;margin-left:2px">3个月</span></div>
<div class="t" style="left:1597px;top:646px;font-size:15px;color:#fff;font-family:'DejaVu Sans','Noto Sans CJK SC',sans-serif;letter-spacing:-.3px">粉丝：<span style="color:#f90;margin-left:2px">2</span></div>
<div class="t" style="left:1597px;top:668px;font-size:15px;color:#fff;font-family:'DejaVu Sans','Noto Sans CJK SC',sans-serif;letter-spacing:-.3px">关注：<span style="color:#f90;margin-left:2px">2</span></div>
<div class="t" style="left:1602px;top:721px;font-size:13.2px;font-weight:bold;color:#ccc;letter-spacing:2px">搜索</div>
<div class="abs" style="left:1602px;top:735px;width:237px;height:1px;background:#aaa;"></div>
<div class="abs" style="left:1589px;top:749px;width:132px;height:32px;background:#fff;border:1px solid #8a8a8a"></div>
<div class="abs" style="left:1727px;top:753px;width:62px;height:26px;background:#e1e1e1;border:1px solid #adadad"></div>
<div class="t" style="left:1735px;top:758px;font-size:15px;color:#000;font-family:'Noto Sans CJK SC',sans-serif">找找看</div>
<div class="abs" style="left:1589px;top:795px;width:132px;height:32px;background:#fff;border:1px solid #8a8a8a"></div>
<div class="abs" style="left:1727px;top:798px;width:77px;height:26px;background:#e1e1e1;border:1px solid #adadad"></div>
<div class="t" style="left:1735px;top:804px;font-size:15px;color:#000;font-family:'Noto Sans CJK SC',sans-serif">谷歌搜索</div>
<div class="t" style="left:1602px;top:864px;font-size:13.4px;font-weight:bold;color:#ccc;letter-spacing:2px">常用链接</div>
<div class="abs" style="left:1602px;top:878px;width:237px;height:1px;background:#aaa;"></div>
<div class="t" style="left:1602px;top:893.0px;font-size:15px;color:#f90;font-family:'Noto Sans CJK SC',sans-serif;letter-spacing:-.3px">我的随笔</div>
<div class="t" style="left:1602px;top:919.5px;font-size:15px;color:#f90;font-family:'Noto Sans CJK SC',sans-serif;letter-spacing:-.3px">我的评论</div>
<div class="t" style="left:1602px;top:946.0px;font-size:15px;color:#f90;font-family:'Noto Sans CJK SC',sans-serif;letter-spacing:-.3px">我的参与</div>
<div class="t" style="left:1602px;top:972.5px;font-size:15px;color:#f90;font-family:'Noto Sans CJK SC',sans-serif;letter-spacing:-.3px">最新评论</div>
<div class="t" style="left:1602px;top:999.0px;font-size:15px;color:#f90;font-family:'Noto Sans CJK SC',sans-serif;letter-spacing:-.3px">我的标签</div>
</div></div>
</div>
<div class="abs" style="left:1350px;top:920px;width:502px;height:64px;background:#f7f7f7;border:1px solid #e03a3a;border-radius:32px;box-shadow:0 2px 8px rgba(0,0,0,.45)"></div>
<div class="abs" style="left:1386px;top:933px;width:35px;height:35px;background:#8f8f8f"></div>
<svg style="left:1403px;top:937px" width="14" height="10"><rect x="0" y="1" width="9" height="7" fill="#fff"/><path d="M9 4.500L13 1.500V7.500Z" fill="#fff"/></svg>
<div class="abs" style="left:1388.5px;top:946px;font-size:22px;font-weight:bold;color:#fff;line-height:1;letter-spacing:-.5px;font-family:'Liberation Sans',sans-serif">Se</div>
<div class="abs" style="left:1434px;top:932px;width:1px;height:38px;background:#cfcfcf"></div>
<div class="abs" style="left:1446.5px;top:944.5px;width:13px;height:13px;border-radius:50%;background:#e8241c"></div>
<div class="abs" style="left:1472px;top:937px;font-size:27.4px;color:#e2231a;line-height:1;white-space:nowrap;font-family:'Liberation Sans',sans-serif">Selenium IDE is recording...</div>
<div class="abs" style="left:60px;top:1030px;width:430px;height:2px;background:#dcdcdc"></div>
</body>
</html>
